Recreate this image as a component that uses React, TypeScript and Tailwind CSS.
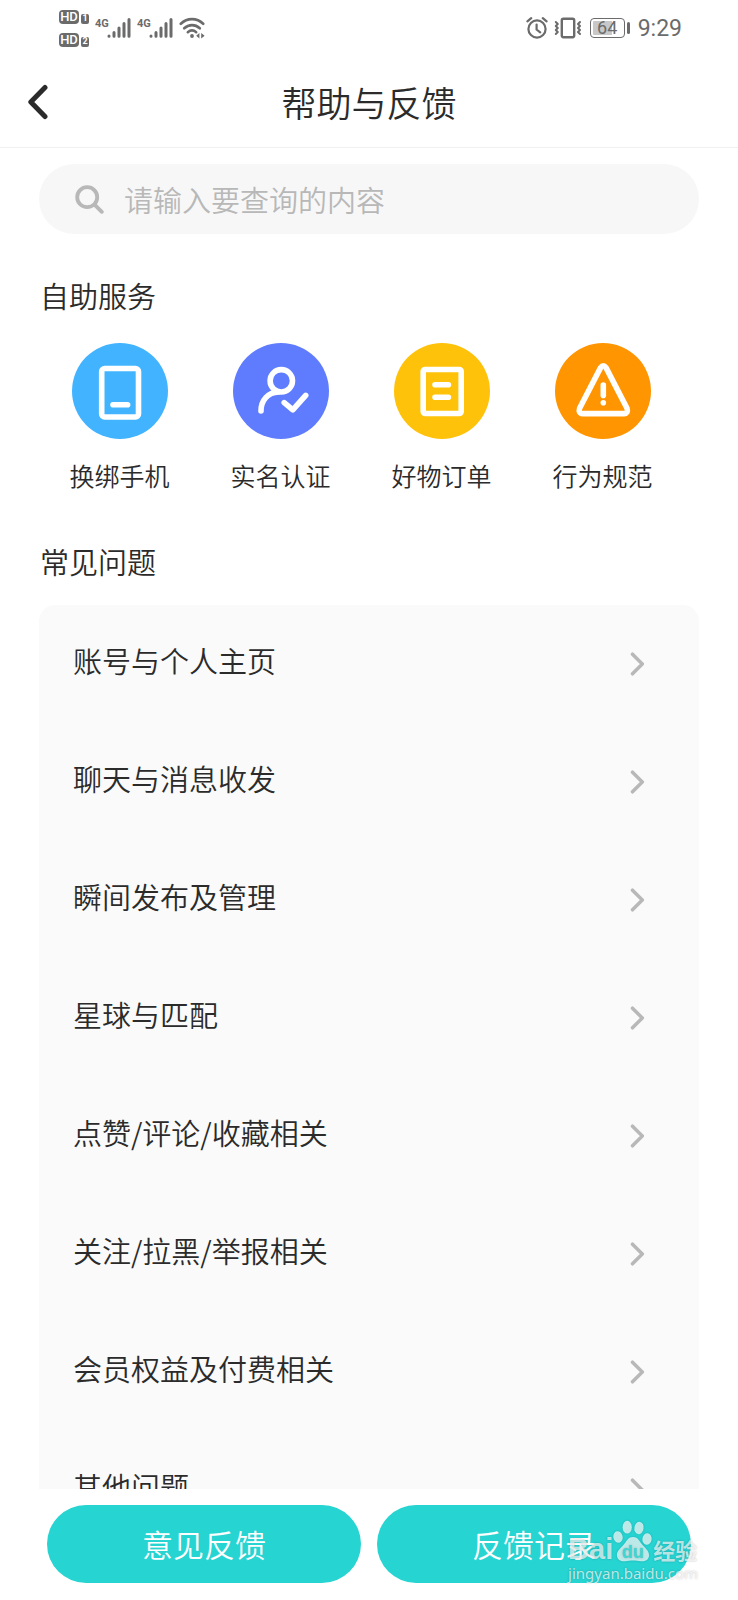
import type { ReactNode } from "react";

const services: { label: string; color: string; icon: ReactNode }[] = [
  {
    label: "换绑手机",
    color: "bg-[#42b4ff]",
    icon: (
      <>
        <rect x="29.7" y="25.5" width="36.8" height="48.5" rx="3" />
        <path d="M41 61.8h14.6" />
      </>
    ),
  },
  {
    label: "实名认证",
    color: "bg-[#5f7cff]",
    icon: (
      <>
        <circle cx="48.3" cy="37.8" r="11.2" />
        <path d="M28 68c0-11 7-18.5 17.5-19" />
        <path d="M51.2 59.6l8.6 7.2 12.9-14.4" />
      </>
    ),
  },
  {
    label: "好物订单",
    color: "bg-[#ffc20a]",
    icon: (
      <>
        <rect x="29.2" y="26.5" width="38" height="44" rx="2" />
        <path d="M41 41.7h13.4M41 54.3h13.4" />
      </>
    ),
  },
  {
    label: "行为规范",
    color: "bg-[#ff9500]",
    icon: (
      <>
        <path d="M45.6 24.6q2.7-3.6 5.4 0L72 65.2q1.6 5.2-3 5.4H27.6q-4.6-.2-3-5.4z" />
        <path d="M48.3 42v10.4" />
        <path d="M48.3 59.8h.01" />
      </>
    ),
  },
];

const questions = [
  "账号与个人主页",
  "聊天与消息收发",
  "瞬间发布及管理",
  "星球与匹配",
  "点赞/评论/收藏相关",
  "关注/拉黑/举报相关",
  "会员权益及付费相关",
  "其他问题",
];

function HdBadge({ sim }: { sim: string }) {
  return (
    <div className="flex items-end gap-[2px]">
      <span className="flex h-[14px] w-5 items-center justify-center rounded-[4px] bg-[#6b6b6b] text-[13px] leading-none font-medium text-white">
        HD
      </span>
      <span className="flex h-[10px] w-2 items-center justify-center rounded-[2px] bg-[#6b6b6b] text-[9px] leading-none font-bold text-white">
        {sim}
      </span>
    </div>
  );
}

function Signal() {
  return (
    <div className="flex items-start">
      <span className="w-3 text-[11px] leading-[14px] font-bold">4G</span>
      <svg width="24" height="22" viewBox="0 0 24 22" stroke="currentColor" strokeWidth="3" strokeLinecap="round">
        <path d="M2 19v.3M7 15.5v3.8M12 11v8.3M17 6.5v12.8M22 2.5v16.8" />
      </svg>
    </div>
  );
}

function StatusBar() {
  return (
    <div className="flex h-14 items-center justify-between pr-14 pl-[59px] font-['Roboto',sans-serif] font-normal text-[#6b6b6b]">
      <div className="flex items-center gap-[6px]">
        <div className="flex flex-col gap-[9px]">
          <HdBadge sim="1" />
          <HdBadge sim="2" />
        </div>
        <Signal />
        <Signal />
        <svg width="26" height="22" viewBox="0 0 26 22" fill="none" stroke="currentColor" strokeWidth="2.6" strokeLinecap="round">
          <path d="M1.8 6.8c6.4-6.2 16-6.2 22.4 0" />
          <path d="M5.2 11.3c4.5-4.2 11-4.2 15.6 0" />
          <path d="M8.8 15.2c2.6-2.2 5.8-2.2 8.4 0" />
          <circle cx="13" cy="19" r="1.9" fill="currentColor" stroke="none" />
          <path d="M20.4 16v5.5l-3.2-2.8zM22.2 16v5.5l3.4-2.8z" fill="currentColor" stroke="none" />
        </svg>
      </div>

      <div className="flex items-center gap-2">
        <div className="flex items-center gap-[6px]">
          <svg width="22" height="22" viewBox="0 0 22 22" fill="none" stroke="currentColor" strokeWidth="2.2" strokeLinecap="round">
            <circle cx="11" cy="12" r="8.6" />
            <path d="M10.6 7.5v5l3.6 2.8M1.4 4.4l3.8-3.2M20.6 4.4l-3.8-3.2" />
          </svg>
          <svg width="28" height="22" viewBox="0 0 28 22" fill="none" stroke="currentColor" strokeWidth="2.4" strokeLinecap="round">
            <rect x="7.8" y="1.8" width="12.4" height="18.4" rx="1.6" />
            <path
              d="M1.8 5l2 2-2 2 2 2-2 2 2 2-2 2M26 5l-2 2 2 2-2 2 2 2-2 2 2 2"
              strokeWidth="2"
              strokeLinejoin="round"
            />
          </svg>
        </div>
        <div className="flex items-center gap-[2px]">
          <span className="flex h-5 w-[35px] items-center rounded-[4px] border border-[#6b6b6b] bg-[linear-gradient(90deg,#c8c8c8_64%,transparent_64%)] bg-clip-content p-[2px]">
            <span className="w-full text-center text-[18px] leading-none">64</span>
          </span>
          <span className="h-3 w-[3px] rounded-full bg-[#6b6b6b]" />
        </div>
        <span className="text-[23px] leading-none">9:29</span>
      </div>
    </div>
  );
}

function Watermark() {
  return (
    <div
      aria-hidden="true"
      className="pointer-events-none absolute right-10 bottom-4 flex flex-col font-normal text-white/70 [text-shadow:0_0_2px_rgba(0,0,0,0.25)]"
    >
      <div className="flex items-end">
        <span className="font-['Liberation_Sans',sans-serif] text-[29px] leading-[26px] font-bold">Bai</span>
        <svg width="40" height="42" viewBox="0 0 40 42" className="drop-shadow-[0_0_1px_rgba(0,0,0,0.25)]">
          <g fill="currentColor">
            <ellipse cx="5" cy="17" rx="4.6" ry="5.8" transform="rotate(-12 5 17)" />
            <ellipse cx="14.2" cy="7.2" rx="4.6" ry="6.4" />
            <ellipse cx="26" cy="8" rx="4.6" ry="6.2" transform="rotate(10 26 8)" />
            <ellipse cx="34" cy="19" rx="4.6" ry="5.8" transform="rotate(8 34 19)" />
            <path d="M20 17c-5.5 0-6.5 5-10.5 9C6 29.5 3.5 32 4 36c.6 4 4 5.6 8 5.2 3-.4 5-.8 8-.8s5 .4 8 .8c4 .4 7.5-1.2 8-5.2.4-4-2.2-6.5-5.5-10C26.5 22 25.5 17 20 17z" />
          </g>
          <text x="20" y="38" textAnchor="middle" fontSize="18" fontWeight="bold" fontFamily="Liberation Sans, sans-serif" fill="#3fd5d2">
            du
          </text>
        </svg>
        <span className="text-[22px] leading-[26px] font-bold">经验</span>
      </div>
      <span className="font-['Noto_Sans',sans-serif] text-[15px] leading-[22px]">jingyan.baidu.com</span>
    </div>
  );
}

export default function App() {
  return (
    <div className="flex h-screen flex-col overflow-hidden bg-white font-['Noto_Sans_CJK_SC',sans-serif] font-[350] text-[#2b2b2b]">
      <StatusBar />

      <header className="grid h-[92px] grid-cols-[80px_1fr_80px] items-center border-b border-[#f0f0f0]">
        <button type="button" aria-label="返回" className="pl-[27px]">
          <svg width="22" height="36" viewBox="0 0 22 36" fill="none" stroke="currentColor" strokeWidth="5" strokeLinecap="round" strokeLinejoin="round">
            <path d="M18 3.5L3.8 18 18 32.5" />
          </svg>
        </button>
        <h1 className="text-center text-[35px] leading-[48px]">帮助与反馈</h1>
      </header>

      <main className="min-h-0 flex-1 overflow-y-auto px-[39px] pt-4 [scrollbar-width:none]">
        <label className="flex h-[70px] items-center gap-5 rounded-full bg-[#f7f7f7] pr-8 pl-9">
          <svg width="29" height="29" viewBox="0 0 29 29" fill="none" stroke="#b8b8b8" strokeWidth="3.8" strokeLinecap="round">
            <circle cx="12.2" cy="12.2" r="10" />
            <path d="M19.8 19.8l7 7" />
          </svg>
          <input
            type="search"
            aria-label="搜索"
            placeholder="请输入要查询的内容"
            className="min-w-0 flex-1 bg-transparent text-[29px] leading-10 outline-none placeholder:text-[#b8b8b8]"
          />
        </label>

        <h2 className="mt-[41px] pl-px text-[29px] leading-10">自助服务</h2>
        <div className="mt-7 mr-4 grid grid-cols-4">
          {services.map((s) => (
            <a key={s.label} href="#" className="flex flex-col items-center gap-[18px]">
              <span className={`size-24 rounded-full ${s.color}`}>
                <svg
                  viewBox="0 0 96 96"
                  className="size-24"
                  fill="none"
                  stroke="#fff"
                  strokeWidth="5.6"
                  strokeLinecap="round"
                  strokeLinejoin="round"
                >
                  {s.icon}
                </svg>
              </span>
              <span className="text-[25px] leading-9">{s.label}</span>
            </a>
          ))}
        </div>

        <h2 className="mt-12 pl-px text-[29px] leading-10">常见问题</h2>
        <ul className="mt-6 rounded-2xl bg-[#fafafa]">
          {questions.map((q) => (
            <li key={q}>
              <a href="#" className="flex h-[118px] items-center justify-between pr-[54px] pl-[34px] text-[29px] leading-10">
                <span className="pb-2">{q}</span>
                <svg width="15" height="24" viewBox="0 0 15 24" fill="none" stroke="#b8b8b8" strokeWidth="3.5" strokeLinecap="round" strokeLinejoin="round">
                  <path d="M2.5 2.2L12.3 12 2.5 21.8" />
                </svg>
              </a>
            </li>
          ))}
        </ul>
      </main>

      <footer className="relative flex gap-4 bg-white px-[47px] pt-4 pb-[17px]">
        <button type="button" className="h-[78px] flex-1 rounded-full bg-[#26d4d2] text-[31px] text-white">
          意见反馈
        </button>
        <button type="button" className="h-[78px] flex-1 rounded-full bg-[#26d4d2] text-[31px] text-white">
          反馈记录
        </button>
        <Watermark />
      </footer>
    </div>
  );
}
